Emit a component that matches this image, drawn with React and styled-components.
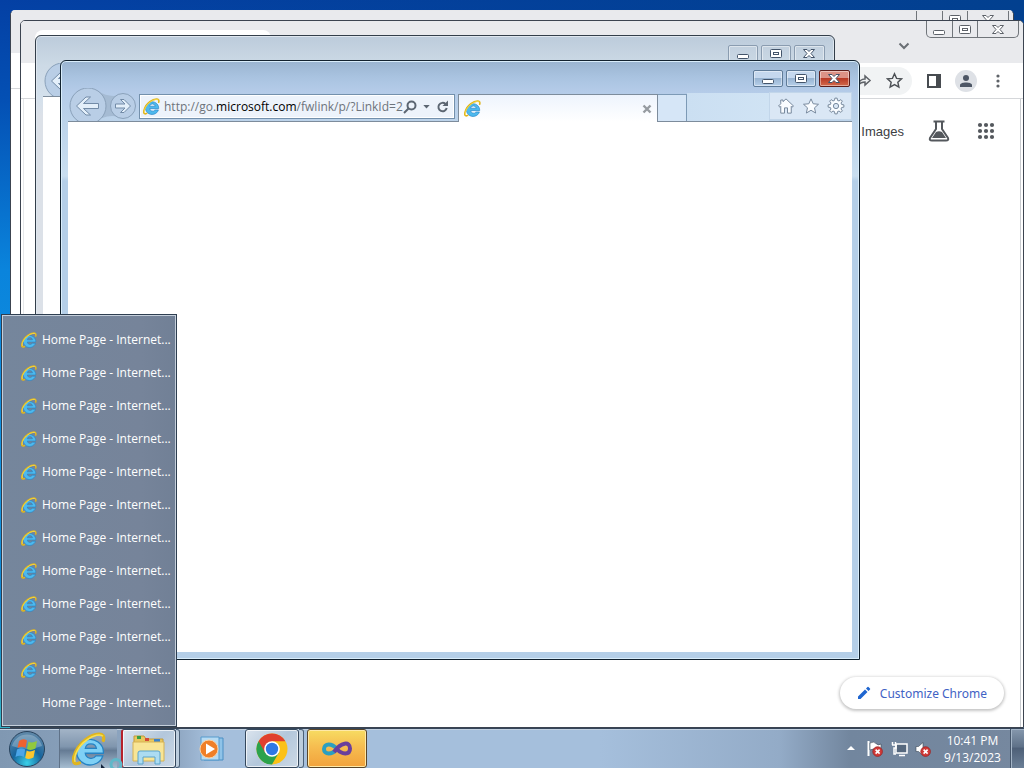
import React from "react";
import styled, { createGlobalStyle, css } from "styled-components";

const Global = createGlobalStyle`
  * { box-sizing: border-box; }
  body { margin: 0; overflow: hidden; font-family: "Open Sans", "Noto Sans", sans-serif; font-size: 12px; }
  button { font: inherit; color: inherit; padding: 0; margin: 0; border: 0; background: none; display: flex; align-items: center; justify-content: center; flex: none; }
  svg { display: block; flex: none; }
`;

const Desktop = styled.div`
  position: relative;
  min-height: 100vh;
  display: flex;
  flex-direction: column;
  justify-content: flex-end;
  overflow: hidden;
  background:
    radial-gradient(circle at 0 94%, #35b6c8 0, transparent 120px),
    linear-gradient(90deg, transparent, #02408f 100%) 0 0 / 100% 60px no-repeat,
    linear-gradient(#0440a4 0, #0450b4 100px, #0a84dc 270px, #1294e0 500px, #0a6ab8);
`;

/* ---------- Chrome windows ---------- */

const ChromeWindow = styled.section`
  position: absolute;
  top: ${(p) => p.$top}px;
  left: ${(p) => p.$left}px;
  right: ${(p) => p.$right}px;
  bottom: 40px;
  display: flex;
  flex-direction: column;
  background: #fff;
  border: 1px solid #3c4450;
  border-top-color: ${(p) => (p.$back ? "#e8e9eb" : "#3c4450")};
  border-radius: 5px 5px 0 0;
  overflow: hidden;
`;

const ChromeTitle = styled.header`
  display: flex;
  justify-content: flex-end;
  height: 42px;
  padding-right: 4px;
  background: #e9eaed;
`;

const ChromeTab = styled.div`
  flex: none;
  align-self: flex-end;
  width: 236px;
  height: 33px;
  margin: 0 auto 0 14px;
  border-radius: 8px 8px 0 0;
  background: #fff;
`;

const ChevronButton = styled.button`
  width: 20px;
  height: 20px;
  margin: 15px 12px 0 0;
`;

const FlatCaptions = styled.div`
  display: flex;
  height: 17px;
  border: 1px solid #70757a;
  border-top: 0;
  border-radius: 0 0 5px 5px;
  button { width: 25px; }
  button + button { border-left: 1px solid #70757a; }
  button:last-child { width: 41px; }
`;

const ChromeToolbar = styled.div`
  display: flex;
  align-items: center;
  justify-content: flex-end;
  height: 36px;
  padding-right: 15px;
  border-bottom: 1px solid #d5d7da;
  background: #fff;
`;

const Omnibox = styled.div`
  flex: 1;
  display: flex;
  align-items: center;
  justify-content: flex-end;
  gap: 14px;
  height: 28px;
  margin: 0 12px 0 120px;
  padding-right: 9px;
  border-radius: 14px;
  background: #f1f3f4;
`;

const ToolButton = styled.button`
  width: 20px;
  height: 24px;
  margin-left: ${(p) => p.$gap || 0}px;
`;

const Avatar = styled.button`
  width: 22px;
  height: 22px;
  margin-left: 11px;
  border-radius: 50%;
  background: #dee1e6;
`;

const ChromePage = styled.main`
  flex: 1;
  display: flex;
  flex-direction: column;
  justify-content: space-between;
  align-items: flex-end;
  margin-left: 2px;
  border-left: 1px solid #e6e8ea;
  border-right: 1px solid #c9ccd0;
  margin-right: 2px;
  padding: 20px 16px 18px;
`;

const GoogleNav = styled.nav`
  display: flex;
  align-items: center;
  gap: 24px;
  height: 24px;
  padding-right: 6px;
  font-family: "Liberation Sans", Arial, sans-serif;
  font-size: 13px;
  a { color: #3c4043; text-decoration: none; }
`;

const Customize = styled.button`
  height: 32px;
  padding: 0 17px 0 16px;
  gap: 8px;
  border-radius: 16px;
  background: #fff;
  color: #3f62c4;
  font-family: "Noto Sans", sans-serif;
  box-shadow: 0 1px 3px 1px #0000003a;
`;

/* ---------- Internet Explorer windows ---------- */

const IEWindow = styled.section`
  position: absolute;
  top: ${(p) => p.$at}px;
  left: ${(p) => p.$at}px;
  width: 800px;
  height: 600px;
  display: flex;
  flex-direction: column;
  padding: 0 7px 7px;
  border: 1px solid ${(p) => (p.$active ? "#12222f" : "#333e4a")};
  border-radius: 6px 6px 0 0;
  box-shadow: inset 0 0 0 1px ${(p) => (p.$active ? "#d9edfb" : "#dfe7ef")};
  background: ${(p) =>
    p.$active
      ? "linear-gradient(#9ab4d0 0, #a9c3e0 16px, #b4cbe8 30px, #bcd3ea 60px, #c9def0 115px, #b5cfe8 120px)"
      : "linear-gradient(#bccbdb 0, #cddae6 30px, #d3e0ec 60px, #dce1e8 80px)"};
`;

const IETitle = styled.header`
  display: flex;
  justify-content: flex-end;
  align-items: flex-end;
  gap: 3px;
  height: 27px;
  padding: 0 2px 1px 0;
`;

const Caption = styled.button`
  width: ${(p) => (p.$close ? 31 : 30)}px;
  height: 17px;
  border: 1px solid ${(p) => (p.$active ? "#5f7b98" : "#8a9cb0")};
  border-radius: 2px;
  box-shadow: inset 0 0 0 1px #ffffff70;
  ${(p) => p.$active && css`background: linear-gradient(#c5d8ee 50%, #98b4d2 50%, #b7d0ea);`}
  ${(p) => p.$close && p.$active && css`border-color: #5c1d1a; background: linear-gradient(#dc9286 50%, #b93a26 50%, #d26a4c);`}
`;

const NavRow = styled.div`
  display: flex;
  height: 34px;
  border-bottom: 1px solid #7d8c9c;
`;

const NavButtons = styled.div`
  width: 71px;
  height: 33px;
  flex: none;
  overflow: hidden;
`;

const Address = styled.form`
  display: flex;
  align-items: center;
  flex: none;
  width: 316px;
  height: 25px;
  margin-top: 6px;
  padding: 0 5px 0 3px;
  gap: 4px;
  border: 1px solid #7390ac;
  box-shadow: inset 0 0 0 1px #fff;
  background: #edf3fb;
`;

const UrlBox = styled.div`
  flex: 1;
  margin-right: -4px;
  line-height: 20px;
  color: #6d747c;
  white-space: nowrap;
  b { font-weight: 400; color: #000; }
`;

const AddressTools = styled.div`
  display: flex;
  align-items: center;
  gap: 6px;
`;

const IETab = styled.div`
  display: flex;
  align-items: center;
  justify-content: space-between;
  flex: none;
  width: 200px;
  height: 28px;
  margin: 6px 0 0 3px;
  padding: 0 5px;
  border: 1px solid #7d8c9c;
  border-bottom: 0;
  background: linear-gradient(#eef4fd, #fff);
`;

const NewTab = styled.button`
  width: 29px;
  height: 27px;
  margin-top: 6px;
  border: 1px solid #7d9ab6;
  border-left: 0;
  border-bottom: 0;
  background: #d6e6f7;
`;

const TabFill = styled.div`
  flex: 1;
  margin-top: 5px;
  background: linear-gradient(90deg, #cbdff2, #d0e3f4);
`;

const IETools = styled.div`
  display: flex;
  align-items: center;
  justify-content: center;
  gap: 7px;
  width: 83px;
  height: 28px;
  margin-top: 4px;
  background: #dae7f5;
  box-shadow: 0 0 0 1px #c2d6ea inset;
`;

const IEPage = styled.main`
  flex: 1;
  background: #fff;
`;

/* ---------- Taskbar ---------- */

const WindowList = styled.ul`
  position: absolute;
  left: 1px;
  bottom: 41px;
  width: 176px;
  margin: 0;
  padding: 8px 9px 7px;
  list-style: none;
  border: 1px solid #2e3e50;
  box-shadow: inset 0 0 0 1px #c5cfdb;
  background: linear-gradient(90deg, #75869c, #76849a 80%, #718096);
  color: #fff;
`;

const WindowItem = styled.li`
  display: flex;
  align-items: center;
  gap: 5px;
  height: 33px;
  padding-left: 10px;
  white-space: nowrap;
`;

const IconSlot = styled.span`
  flex: none;
  width: 16px;
  height: 16px;
`;

const Taskbar = styled.footer`
  position: relative;
  display: flex;
  align-items: stretch;
  height: 40px;
  border-top: 1px solid #34455a;
  box-shadow: inset 0 1px 0 #c3d1e0;
  background: linear-gradient(90deg, #8098b2 0, #91a9c4 180px, #a5bfdc 210px, #a5bfdc 600px, #93abc7 780px, #72869e 850px, #76889f 100%);
`;

const StartButton = styled.button`
  width: 54px;
`;

const TaskButton = styled.button`
  position: relative;
  width: ${(p) => p.$w}px;
  margin-left: ${(p) => p.$gap || 0}px;
  ${(p) => p.$kind === "hot" && css`background: linear-gradient(#a3b4c7, #8096ae 45%, #657b94 55%, #a6bdd1); border-left: 1px solid #5f7288;`}
  ${(p) => p.$kind === "open" && css`
    border: 1px solid #34475c; border-radius: 3px; box-shadow: inset 0 0 0 1px #ffffffb0;
    background: linear-gradient(135deg, #dbe4ee, #b3c7db 50%, #ccd9e6);`}
  ${(p) => p.$kind === "alert" && css`
    border: 1px solid #58452a; border-radius: 3px; box-shadow: inset 0 0 0 1px #ffe9a8;
    background: linear-gradient(#f7dc62, #f6bd50 45%, #f2a23c);`}
  ${(p) => p.$red && css`border-left: 2px solid #b5222c;`}
`;

const StackEdge = styled.span`
  width: ${(p) => p.$w || 4}px;
  border: 1px solid #4a6078;
  border-left: 0;
  border-radius: 0 3px 3px 0;
  background: #bccddd;
`;

const Tray = styled.div`
  display: flex;
  align-items: center;
  margin-left: auto;
`;

const TrayButton = styled.button`
  width: 24px;
  height: 24px;
`;

const Clock = styled.time`
  width: 75px;
  line-height: 17px;
  text-align: center;
  color: #fff;
`;

const ShowDesktop = styled.button`
  align-self: stretch;
  width: 14px;
  border-left: 1px solid #45566b;
  box-shadow: inset 1px 1px 0 #a4b5c7;
  background: linear-gradient(#8698ad, #5f7289 45%, #4e6078 50%, #6b7f96);
`;

const Busy = styled.svg`
  position: absolute;
  left: 100px;
  bottom: -8px;
`;

/* ---------- Drawings ---------- */

const IEIcon = ({ size, light }) => (
  <svg width={size} height={size} viewBox="0 0 32 32" aria-hidden="true">
    <path d="M29.500 20H12.500A5.500 5.300 0 0 0 22.500 22.500H29A12.500 12 0 1 1 29.500 20ZM12.500 15.500H23A5.300 5 0 0 0 12.500 15.500Z" fill={light ? "#7ed0f5" : "#4db9ee"} stroke="#2583c4" strokeWidth="1.200" fillRule="evenodd" />
    <path d="M7 29C-3 34 1 16 13 7C21 1 32 -1 29.500 8" fill="none" stroke="#e0b51e" strokeWidth="3" strokeLinecap="round" />
    <path d="M3 28C1 23 6 13 14 7.500C20 3 27 1.500 29 4" fill="none" stroke="#f7e052" strokeWidth="1.500" />
  </svg>
);

const Glyph = ({ kind, flat }) => (
  <svg width="17" height="13" viewBox="0 0 17 13" fill="#fff" stroke={flat ? "#5d6269" : "#43546a"} aria-hidden="true">
    {kind === "min" && <rect x="2.500" y="7.500" width="11" height="4" rx="1" />}
    {kind === "max" && <><rect x="2.500" y="2.500" width="11" height="8" rx="1" /><rect x="5.500" y="5.500" width="5" height="2" /></>}
    {kind === "close" && <path d="M2.500 2.500H6L8 4.500L10 2.500H13.500L10 6.500L13.500 10.500H10L8 8.500L6 10.500H2.500L6 6.500Z" />}
  </svg>
);

const Captions = ({ active }) =>
  ["min", "max", "close"].map((k) => (
    <Caption key={k} $active={active} $close={k === "close"} aria-label={k}><Glyph kind={k} /></Caption>
  ));

const Flat = () => (
  <FlatCaptions>
    {["min", "max", "close"].map((k) => <button key={k} aria-label={k}><Glyph kind={k} flat /></button>)}
  </FlatCaptions>
);

const NavArrows = () => (
  <svg width="71" height="37" viewBox="0 0 71 37" aria-hidden="true">
    <path d="M30 3Q42 11 56 6V30Q44 26 34 30Z" fill="#a5bbd3" />
    <circle cx="20" cy="18" r="18" fill="#b9cee6" stroke="#8aa1ba" />
    <circle cx="55" cy="18" r="12.500" fill="#b9cee6" stroke="#8aa1ba" />
    <path d="M8.500 18L18 9H22.500L15.500 15.500H30.500V20.500H15.500L22.500 27H18Z" fill="#e3effa" stroke="#728ba7" strokeLinejoin="round" />
    <path d="M62.500 18L56 11.500H52.500L57 16H47.500V20H57L52.500 24.500H56Z" fill="#e3effa" stroke="#728ba7" strokeLinejoin="round" />
  </svg>
);

const Cross = () => (
  <svg width="14" height="14" viewBox="0 0 14 14"><circle cx="7" cy="7" r="6" fill="#d13a38" stroke="#9d2222" /><path d="M4.500 4.500L9.500 9.500M9.500 4.500L4.500 9.500" stroke="#fff" strokeWidth="2" /></svg>
);

const STAR = "M12 2.500L14.900 9L22 9.700L16.700 14.400L18.200 21.400L12 17.700L5.800 21.400L7.300 14.400L2 9.700L9.100 9Z";
const GEAR = "M10.500 1.500H13.500L14 4.500L16 5.300L18.500 3.500L20.500 5.500L18.700 8L19.500 10L22.500 10.500V13.500L19.500 14L18.700 16L20.500 18.500L18.500 20.500L16 18.700L14 19.500L13.500 22.500H10.500L10 19.500L8 18.700L5.500 20.500L3.500 18.500L5.300 16L4.500 14L1.500 13.500V10.500L4.500 10L5.300 8L3.500 5.500L5.500 3.500L8 5.300L10 4.500ZM12 8.500A3.500 3.500 0 1 0 12 15.500A3.500 3.500 0 1 0 12 8.500Z";

const ToolIcon = ({ d }) => (
  <svg width="18" height="18" viewBox="0 0 24 24" fill="#f9fcff" stroke="#75879b" strokeWidth="1.300" strokeLinejoin="round" fillRule="evenodd" aria-hidden="true"><path d={d} /></svg>
);

const PlainButton = styled.button`
  width: 18px;
  height: 20px;
`;

function ExplorerWindow({ at, active, url }) {
  return (
    <IEWindow $at={at} $active={active}>
      <IETitle><Captions active={active} /></IETitle>
      <NavRow>
        <NavButtons><NavArrows /></NavButtons>
        {active && (
          <>
            <Address>
              <IEIcon size={17} />
              <UrlBox>{url}</UrlBox>
              <AddressTools>
                <svg width="14" height="14" viewBox="0 0 14 14" fill="none" stroke="#5c6672" strokeWidth="2"><circle cx="8.500" cy="5.500" r="4" /><path d="M5.500 8.500L1 13" /></svg>
                <svg width="7" height="4" viewBox="0 0 8 5"><path d="M0 0H8L4 4.500Z" fill="#5c6672" /></svg>
                <svg width="13" height="14" viewBox="0 0 13 14"><path d="M9.500 4A4.200 4.200 0 1 0 10.700 8" fill="none" stroke="#5c6672" strokeWidth="2" /><path d="M12 0.500V6H6.500Z" fill="#5c6672" /></svg>
              </AddressTools>
            </Address>
            <IETab>
              <IEIcon size={17} />
              <svg width="10" height="10" viewBox="0 0 10 10"><path d="M1.500 1.500L8.500 8.500M8.500 1.500L1.500 8.500" stroke="#969ba1" strokeWidth="2.400" /></svg>
            </IETab>
            <NewTab aria-label="New tab" />
            <TabFill />
            <IETools>
              <PlainButton aria-label="Home"><ToolIcon d="M12 2.500L22 12L20 13.500L19 12.500V21.500H14V14.500H10V21.500H5V12.500L4 13.500L2 12L5 9V4H8V6.200Z" /></PlainButton>
              <PlainButton aria-label="Favorites"><ToolIcon d={STAR} /></PlainButton>
              <PlainButton aria-label="Tools"><ToolIcon d={GEAR} /></PlainButton>
            </IETools>
          </>
        )}
      </NavRow>
      <IEPage />
    </IEWindow>
  );
}

export default function App() {
  return (
    <Desktop>
      <Global />
      <ChromeWindow $top={10} $left={10} $right={10} $back>
        <ChromeTitle><Flat /></ChromeTitle>
        <ChromeToolbar />
      </ChromeWindow>

      <ChromeWindow $top={20} $left={20} $right={0}>
        <ChromeTitle>
          <ChromeTab />
          <ChevronButton aria-label="Search tabs"><svg width="12" height="8" viewBox="0 0 12 8"><path d="M1.500 1.500L6 6L10.500 1.500" fill="none" stroke="#6a6f74" strokeWidth="2" /></svg></ChevronButton>
          <Flat />
        </ChromeTitle>
        <ChromeToolbar>
          <Omnibox>
            <svg width="16" height="16" viewBox="0 0 16 16" fill="none" stroke="#5f6368" strokeWidth="1.500"><path d="M2 12C3 8 6 6 9 6V3L14 7.500L9 12V9C6 9 4 10 2 12Z" /></svg>
            <svg width="17" height="17" viewBox="0 0 24 24" fill="none" stroke="#4d5156" strokeWidth="2"><path d={STAR} /></svg>
          </Omnibox>
          <ToolButton aria-label="Side panel"><svg width="14" height="14" viewBox="0 0 14 14"><rect x="1" y="1" width="12" height="12" fill="#fff" stroke="#474b50" strokeWidth="2" /><rect x="9" y="1" width="4" height="12" fill="#474b50" /></svg></ToolButton>
          <Avatar aria-label="Profile"><svg width="14" height="14" viewBox="0 0 14 14" fill="#4d5665"><circle cx="7" cy="4" r="3" /><path d="M1 13V11C1 7.500 13 7.500 13 11V13Z" /></svg></Avatar>
          <ToolButton $gap={11} aria-label="Menu"><svg width="4" height="14" viewBox="0 0 4 14" fill="#5f6368"><circle cx="2" cy="2" r="1.600" /><circle cx="2" cy="7" r="1.600" /><circle cx="2" cy="12" r="1.600" /></svg></ToolButton>
        </ChromeToolbar>
        <ChromePage>
          <GoogleNav>
            <a href="#images">Images</a>
            <svg width="22" height="22" viewBox="0 0 22 22"><path d="M5.500 1.500H16.500M8 2V9L2 18Q1 20.500 4 20.500H18Q21 20.500 20 18L14 9V2" fill="none" stroke="#54585d" strokeWidth="2" /><path d="M8 12Q11 10.500 14 12L18 18H4Z" fill="#54585d" /></svg>
            <svg width="24" height="24" viewBox="0 0 24 24" fill="#54585d">{[6, 12, 18].map((y) => [6, 12, 18].map((x) => <circle key={x + "-" + y} cx={x} cy={y} r="2.100" />))}</svg>
          </GoogleNav>
          <Customize>
            <svg width="16" height="16" viewBox="0 0 16 16" fill="#1f66d0"><path d="M2 11.500V14H4.500L11.500 7L9 4.500ZM10 3.500L12.500 6L14 4.500Q14.500 4 14 3.500L12.500 2Q12 1.500 11.500 2Z" /></svg>
            Customize Chrome
          </Customize>
        </ChromePage>
      </ChromeWindow>

      <ExplorerWindow at={35} />
      <ExplorerWindow at={60} active url={<>http://go.<b>microsoft.com</b>/fwlink/p/?LinkId=2</>} />

      <WindowList>
        {Array.from({ length: 12 }, (_, i) => (
          <WindowItem key={i}><IconSlot>{i < 11 && <IEIcon size={16} />}</IconSlot>Home Page - Internet...</WindowItem>
        ))}
      </WindowList>

      <Taskbar>
        <StartButton aria-label="Start">
          <svg width="38" height="38" viewBox="0 0 38 38">
            <defs><radialGradient id="orb" cx="50%" cy="90%" r="85%"><stop offset="0" stopColor="#39d0e8" /><stop offset=".5" stopColor="#17659d" /><stop offset="1" stopColor="#5d87a8" /></radialGradient></defs>
            <circle cx="19" cy="19" r="17.500" fill="url(#orb)" stroke="#28425c" />
            <path d="M4 16A15.500 15.500 0 0 1 34 16Q19 22 4 16Z" fill="#fff" opacity=".25" />
            <path d="M11 11Q15 8 19 10.500L17.500 18Q14 15.500 9.500 18Z" fill="#ef6230" />
            <path d="M20.500 11.500Q24 13.500 29 11L27.500 18.500Q23 21 19 19Z" fill="#91c83e" />
            <path d="M9 19.500Q13 17 17.200 19.500L15.700 27Q12 24.500 7.500 27Z" fill="#4ba5e8" />
            <path d="M18.700 20.500Q22 22.500 27 20L25.500 27.500Q21 30 17.200 28Z" fill="#fbc62e" />
          </svg>
        </StartButton>
        <TaskButton $w={58} $gap={5} $kind="hot" aria-label="Internet Explorer"><IEIcon size={34} light /></TaskButton>
        <TaskButton $w={55} $gap={4} $kind="open" $red aria-label="Windows Explorer">
          <svg width="34" height="32" viewBox="0 0 34 32">
            <path d="M2 3H12L14 6H31V26H2Z" fill="#e9c860" stroke="#c29b3b" />
            <path d="M5 3H9V6H5Z" fill="#35a046" /><path d="M13 5H17V8H13Z" fill="#d44b35" /><path d="M22 6H28V9H22Z" fill="#3b83cd" />
            <path d="M1 9H32V28H1Z" fill="#f8e596" stroke="#d5b254" />
            <path d="M6 31V20Q6 18 8 18H26Q28 18 28 20V31H23V24H11V31Z" fill="#acdcf2" stroke="#5ba4cb" />
          </svg>
        </TaskButton>
        <StackEdge $w={4} />
        <TaskButton $w={62} aria-label="Media Player">
          <svg width="28" height="26" viewBox="0 0 28 26"><path d="M7 2H26V24H7Z" fill="#8fc3e8" stroke="#4b8fc4" /><path d="M4 1H22V24H4Z" fill="#b7dbf3" stroke="#579bcd" /><circle cx="12" cy="13" r="9" fill="#ef7f28" stroke="#fbd2a4" /><path d="M9 7.500L18 13L9 18.500Z" fill="#fff" /></svg>
        </TaskButton>
        <TaskButton $w={54} $gap={3} $kind="open" aria-label="Chrome">
          <svg width="32" height="32" viewBox="0 0 32 32">
            <circle cx="16" cy="16" r="15.500" fill="#fbc116" />
            <path d="M16 16L2.600 8.200A15.500 15.500 0 0 0 16 31.500L22.700 19.900Z" fill="#2ba24c" />
            <path d="M2.600 8.200A15.500 15.500 0 0 1 29.400 8.200H16L9.300 19.900Z" fill="#e0402f" />
            <circle cx="16" cy="16" r="7.800" fill="#fff" /><circle cx="16" cy="16" r="6.200" fill="#2e78e4" />
          </svg>
        </TaskButton>
        <StackEdge $w={5} />
        <TaskButton $w={60} $gap={3} $kind="alert" aria-label="Visual Studio">
          <svg width="32" height="20" viewBox="0 0 32 20" fill="none" strokeWidth="4"><path d="M16 10C11 4 3 4 3 10C3 16 11 16 16 10" stroke="#2c9fc0" /><path d="M13 13C20 3 29 2 29 9.500C29 16 21 16 16 10" stroke="#6a3f9c" /></svg>
        </TaskButton>

        <Tray>
          <TrayButton aria-label="Show hidden icons"><svg width="8" height="5" viewBox="0 0 8 5"><path d="M4 0L8 4H0Z" fill="#fff" /></svg></TrayButton>
          <TrayButton aria-label="Action Center"><svg width="16" height="16" viewBox="0 0 16 16"><path d="M1.500 0V15" stroke="#fff" strokeWidth="2" /><path d="M3 2Q7 0 9 2.500T14 3V10Q11 11 9 9T3 9Z" fill="#fff" stroke="#3a4656" strokeWidth=".6" /><g transform="translate(5 5) scale(.8)"><Cross /></g></svg></TrayButton>
          <TrayButton aria-label="Network"><svg width="17" height="16" viewBox="0 0 17 16"><rect x="5" y="3" width="11" height="9" fill="#56687e" stroke="#fff" strokeWidth="1.500" /><path d="M8 14.500H14M1.500 1V4M4.500 1V4M1 4H5V7H3V13H5" fill="none" stroke="#fff" strokeWidth="1.500" /></svg></TrayButton>
          <TrayButton aria-label="Volume"><svg width="16" height="16" viewBox="0 0 16 16"><path d="M1 5.500H3.500L8 1.500V14.500L3.500 10.500H1Z" fill="#fff" stroke="#3a4656" strokeWidth=".6" /><g transform="translate(5 5) scale(.8)"><Cross /></g></svg></TrayButton>
          <Clock>10:41 PM<br />9/13/2023</Clock>
          <ShowDesktop aria-label="Show desktop" />
        </Tray>
        <Busy width="26" height="18" viewBox="0 0 26 18" aria-hidden="true"><path d="M1 6V16L4 13H8Z" fill="#14233a" /><circle cx="16" cy="6.500" r="5" fill="none" stroke="#5fb8c9" strokeWidth="3" /></Busy>
      </Taskbar>
    </Desktop>
  );
}
